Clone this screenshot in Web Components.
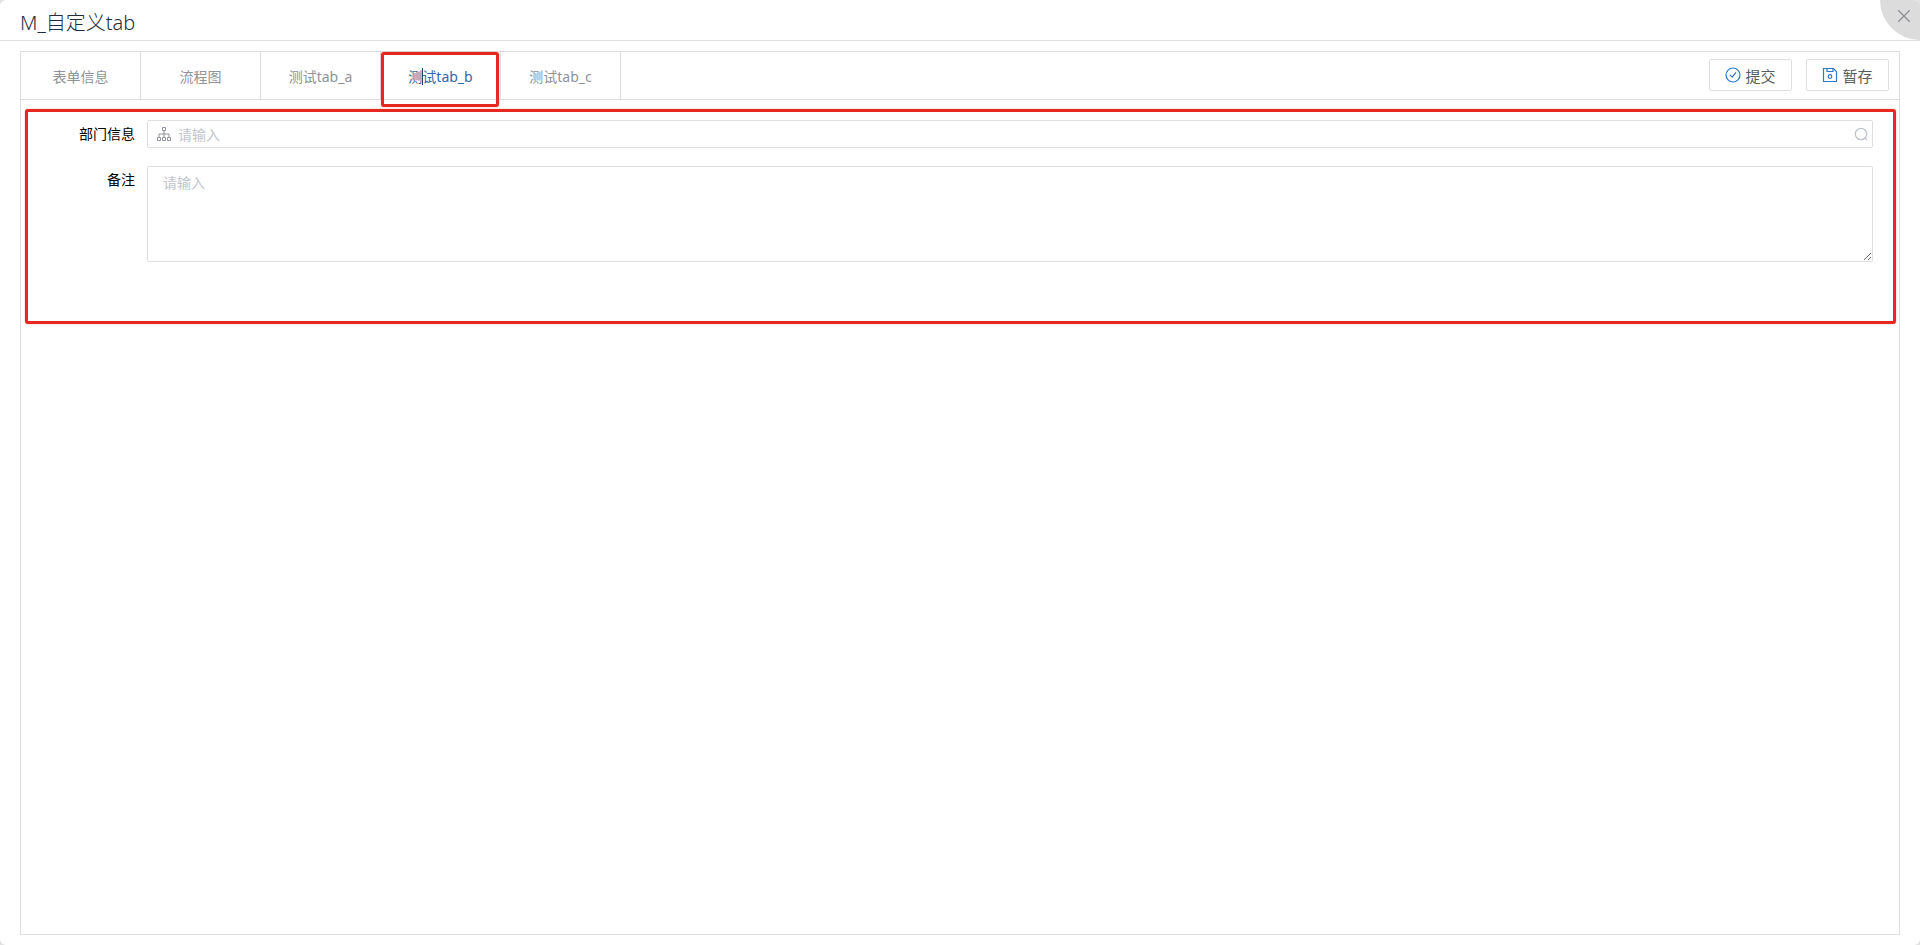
<!DOCTYPE html>
<html lang="zh-CN">
<head>
<meta charset="utf-8">
<title>M_自定义tab</title>
<style>
  html,
  body {
    height: 100%;
    margin: 0;
  }

  body {
    background-color: rgb(225, 225, 225);
    font-family: "Noto Sans", "Noto Sans CJK SC", sans-serif;
    font-size: 14px;
    color: rgb(0, 0, 0);
  }
</style>
</head>
<body>
<form-dialog>
  <span slot="title">M_自定义tab</span>
  <tab-bar>
    <tab-item>表单信息</tab-item>
    <tab-item>流程图</tab-item>
    <tab-item>测试tab_a</tab-item>
    <tab-item active>测试tab_b</tab-item>
    <tab-item>测试tab_c</tab-item>
    <tool-button slot="tools" icon="submit">提交</tool-button>
    <tool-button slot="tools" icon="save">暂存</tool-button>
  </tab-bar>
  <form-section>
    <department-field label="部门信息" placeholder="请输入"></department-field>
    <remark-field label="备注" placeholder="请输入"></remark-field>
  </form-section>
</form-dialog>

<script>
const icons = {
  submit: `
    <svg width="16" height="16" viewBox="0 0 16 16" fill="none" stroke="currentColor" stroke-width="1.2">
      <circle cx="8" cy="8" r="7"/>
      <path d="M4.8 7.8l2.4 2.4L11 5.4"/>
    </svg>`,
  save: `
    <svg width="16" height="16" viewBox="0 0 16 16" fill="none" stroke="currentColor" stroke-width="1.2">
      <path d="M1.5 1.5h10l3 3v10h-13z"/>
      <path d="M5 1.5v3h6v-3"/>
      <circle cx="8" cy="9.5" r="1.8"/>
    </svg>`
}

/**
 * Attaches an open shadow root with the given markup.
 *
 * @param {HTMLElement} host - The element.
 * @param {string} html - The markup with its styles.
 */
function render (host, html) {
  const template = document.createElement('template')
  template.innerHTML = html
  host.attachShadow({ mode: 'open' }).appendChild(template.content.cloneNode(true))
}

customElements.define('form-dialog',
  class extends HTMLElement {
    constructor () {
      super()
      render(this, `
        <style>
          :host {
            display: flex;
            flex-direction: column;
            position: relative;
            overflow: hidden;
            min-height: 100%;
            border-radius: 6px;
            background-color: white;
          }

          header {
            box-sizing: border-box;
            height: 41px;
            padding: 5px 20px 0;
            border-bottom: 1px solid rgb(220, 222, 226);
          }

          h1 {
            margin: 0;
            font-size: 20px;
            font-weight: 300;
            line-height: 35px;
            color: rgb(31, 45, 61);
          }

          .close {
            position: absolute;
            top: 0;
            right: 0;
            width: 40px;
            height: 40px;
            padding: 0;
            border: none;
            border-bottom-left-radius: 40px;
            background-color: rgb(220, 220, 220);
            color: rgb(144, 147, 153);
          }

          .close svg {
            display: block;
            margin: -8px 0 0 18px;
          }

          main {
            flex: 1;
            margin: 10px 20px;
            border: 1px solid rgb(220, 222, 226);
          }
        </style>
        <header><h1><slot name="title"></slot></h1></header>
        <button class="close" type="button" aria-label="关闭">
          <svg width="12" height="12" viewBox="0 0 12 12" fill="none" stroke="currentColor" stroke-width="1.4">
            <path d="M0 0l12 12M12 0L0 12"/>
          </svg>
        </button>
        <main><slot></slot></main>
      `)
    }
  })

customElements.define('tab-bar',
  class extends HTMLElement {
    constructor () {
      super()
      render(this, `
        <style>
          :host {
            display: flex;
            justify-content: space-between;
            height: 47px;
            border-bottom: 1px solid rgb(220, 222, 226);
          }

          nav,
          .tools {
            display: flex;
          }

          .tools {
            align-items: flex-start;
            gap: 14px;
            padding: 7px 10px 0 0;
          }
        </style>
        <nav><slot></slot></nav>
        <div class="tools"><slot name="tools"></slot></div>
      `)
    }
  })

customElements.define('tab-item',
  class extends HTMLElement {
    constructor () {
      super()
      render(this, `
        <style>
          :host {
            display: block;
            position: relative;
            box-sizing: border-box;
            width: 120px;
            border-right: 1px solid rgb(220, 222, 226);
          }

          button {
            width: 100%;
            height: 100%;
            padding: 0;
            border: none;
            background: none;
            font: inherit;
            color: rgb(144, 147, 153);
          }

          :host([active]) button {
            color: rgb(52, 102, 168);
          }

          .mark,
          .caret {
            display: none;
            position: absolute;
            pointer-events: none;
          }

          :host([active]) .mark,
          :host([active]) .caret {
            display: block;
          }

          .mark {
            inset: 0 1px -8px 0;
            border: 3px solid rgb(230, 40, 32);
            border-radius: 3px;
            box-shadow: 0 0 1px rgb(230, 40, 32);
          }

          .caret {
            top: 16px;
            left: 41px;
            width: 1px;
            height: 17px;
            background-color: rgb(31, 61, 110);
          }
        </style>
        <button type="button"><slot></slot></button>
        <span class="caret"></span>
        <span class="mark"></span>
      `)
    }
  })

customElements.define('tool-button',
  class extends HTMLElement {
    constructor () {
      super()
      render(this, `
        <style>
          :host {
            display: block;
          }

          button {
            display: flex;
            align-items: center;
            justify-content: center;
            gap: 4px;
            box-sizing: border-box;
            width: 83px;
            height: 32px;
            padding: 0;
            border: 1px solid rgb(220, 222, 226);
            border-radius: 2px;
            background-color: white;
            font: inherit;
            font-size: 15px;
            color: rgb(88, 91, 96);
          }

          svg {
            display: block;
            color: rgb(45, 120, 200);
          }
        </style>
        <button type="button">${icons[this.getAttribute('icon')]}<span><slot></slot></span></button>
      `)
    }
  })

customElements.define('form-section',
  class extends HTMLElement {
    constructor () {
      super()
      render(this, `
        <style>
          :host {
            display: flex;
            flex-direction: column;
            gap: 18px;
            margin: 9px 3px 0 4px;
            padding: 8px 20px 59px 9px;
            border: 3px solid rgb(230, 40, 32);
            border-radius: 3px;
            box-shadow: 0 0 1px rgb(230, 40, 32);
          }
        </style>
        <slot></slot>
      `)
    }
  })

const fieldStyle = `
  :host {
    display: grid;
    grid-template-columns: 98px 1fr;
    column-gap: 12px;
  }

  label {
    line-height: 28px;
    text-align: right;
  }

  input,
  textarea {
    font: inherit;
    color: rgb(96, 98, 102);
    outline: none;
  }

  ::placeholder {
    color: rgb(192, 196, 204);
    opacity: 1;
  }
`

customElements.define('department-field',
  class extends HTMLElement {
    constructor () {
      super()
      render(this, `
        <style>
          ${fieldStyle}

          .box {
            display: flex;
            align-items: center;
            gap: 7px;
            box-sizing: border-box;
            height: 28px;
            padding: 0 4px 0 9px;
            border: 1px solid rgb(220, 222, 226);
            border-radius: 2px;
          }

          input {
            flex: 1;
            min-width: 0;
            height: 26px;
            padding: 0;
            border: none;
            background: none;
          }
        </style>
        <label for="field">${this.getAttribute('label')}</label>
        <div class="box">
          <svg width="14" height="14" viewBox="0 0 14 14" fill="none" stroke="rgb(144, 147, 153)">
            <path d="M5.5 .5h3v3h-3zM.5 10.5h3v3h-3zM5.5 10.5h3v3h-3zM10.5 10.5h3v3h-3zM7 3.5v7M2 10.5v-3.5h10v3.5"/>
          </svg>
          <input id="field" type="text" placeholder="${this.getAttribute('placeholder')}">
          <svg width="14" height="14" viewBox="0 0 14 14" fill="none" stroke="rgb(192, 196, 204)" stroke-width="1.3">
            <circle cx="7" cy="7" r="5.7"/>
            <path d="M11 11l2 2"/>
          </svg>
        </div>
      `)
    }
  })

customElements.define('remark-field',
  class extends HTMLElement {
    constructor () {
      super()
      render(this, `
        <style>
          ${fieldStyle}

          textarea {
            display: block;
            box-sizing: border-box;
            width: 100%;
            height: 96px;
            padding: 5px 15px;
            border: 1px solid rgb(220, 222, 226);
            border-radius: 2px;
            line-height: 21px;
            resize: vertical;
          }
        </style>
        <label for="field">${this.getAttribute('label')}</label>
        <textarea id="field" placeholder="${this.getAttribute('placeholder')}"></textarea>
      `)
    }
  })
</script>
</body>
</html>
